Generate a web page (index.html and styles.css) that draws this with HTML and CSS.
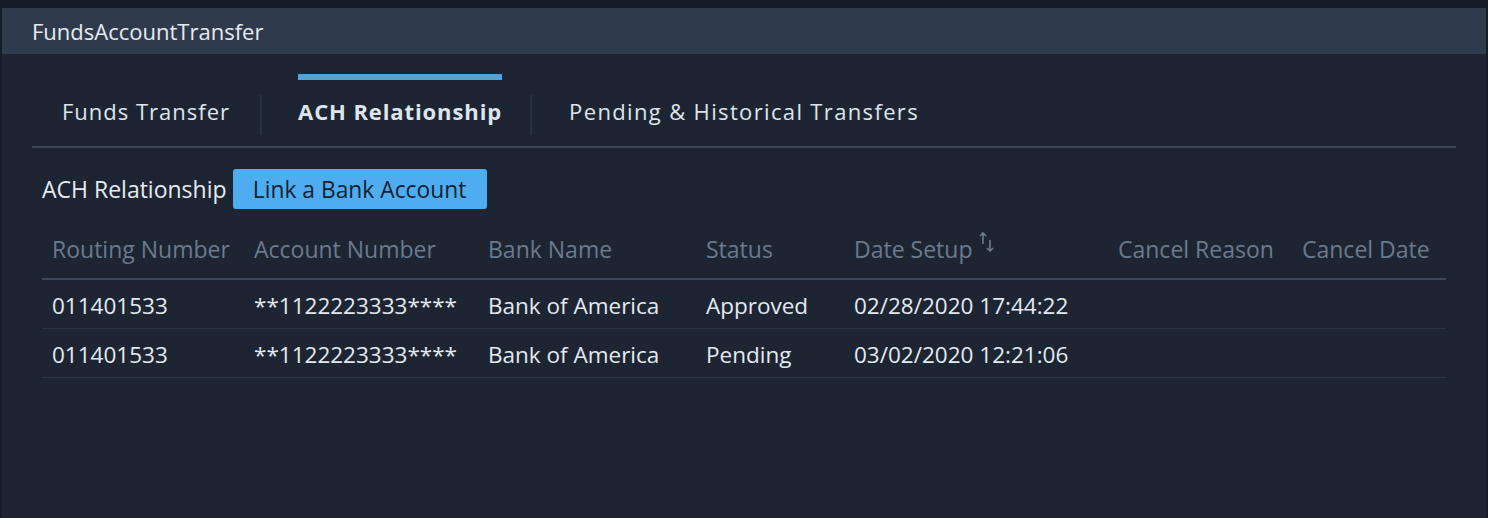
FILE: index.html
```html
<!DOCTYPE html>
<html>
<head>
<meta charset="utf-8">
<link rel="stylesheet" href="styles.css">
</head>
<body>
<div class="window">
  <div class="titlebar">FundsAccountTransfer</div>
  <div class="content">
    <div class="tabs">
      <div class="tab">Funds Transfer</div>
      <div class="sep sep1"></div>
      <div class="tab active">ACH Relationship</div>
      <div class="sep sep2"></div>
      <div class="tab">Pending &amp; Historical Transfers</div>
    </div>
    <div class="section">
      <div class="toolbar">
        <span class="label">ACH Relationship</span>
        <button class="btn">Link a Bank Account</button>
      </div>
      <table class="grid">
        <colgroup>
          <col class="c1"><col class="c2"><col class="c3"><col class="c4"><col class="c5"><col class="c6"><col class="c7">
        </colgroup>
        <thead>
          <tr>
            <th>Routing Number</th>
            <th>Account Number</th>
            <th>Bank Name</th>
            <th>Status</th>
            <th>Date Setup<svg class="sort" width="18" height="22" viewBox="0 0 18 22"><path d="M5 2 L5 13 M2 5 L5 2 L8 5" fill="none" stroke="#6b7a8c" stroke-width="1.6"/><path d="M12 9 L12 20 M9 17 L12 20 L15 17" fill="none" stroke="#6b7a8c" stroke-width="1.6"/></svg></th>
            <th>Cancel Reason</th>
            <th>Cancel Date</th>
          </tr>
        </thead>
        <tbody>
          <tr>
            <td>011401533</td>
            <td>**1122223333****</td>
            <td>Bank of America</td>
            <td>Approved</td>
            <td>02/28/2020 17:44:22</td>
            <td></td>
            <td></td>
          </tr>
          <tr>
            <td>011401533</td>
            <td>**1122223333****</td>
            <td>Bank of America</td>
            <td>Pending</td>
            <td>03/02/2020 12:21:06</td>
            <td></td>
            <td></td>
          </tr>
        </tbody>
      </table>
    </div>
  </div>
</div>
</body>
</html>
```

FILE: styles.css
```css
html, body {
  margin: 0;
  padding: 0;
  background: #161d28;
  font-family: "Open Sans", "Noto Sans", sans-serif;
}
.window {
  margin: 8px 2px 0 2px;
  height: 510px;
  background: #1d2533;
}
.titlebar {
  height: 46px;
  line-height: 46px;
  background: #2f3b4c;
  color: #e6ebf1;
  font-size: 22px;
  padding-left: 30px;
}
.content {
  padding: 20px 30px 0 30px;
}
.tabs {
  display: flex;
  align-items: center;
  height: 72px;
  border-bottom: 2px solid #3b4858;
}
.tab {
  height: 72px;
  box-sizing: border-box;
  border-top: 6px solid transparent;
  line-height: 62px;
  font-size: 22px;
  letter-spacing: 1px;
  color: #dfe5ec;
  white-space: nowrap;
}
.tab:first-child {
  margin-left: 30px;
}
.tab.active {
  border-top-color: #4ea3dc;
  font-weight: 700;
  letter-spacing: 0.9px;
}
.tab:last-child {
  letter-spacing: 1.35px;
}
.sep {
  width: 2px;
  height: 40px;
  margin-top: 10px;
  background: #273241;
}
.sep1 { margin-left: 30px; margin-right: 36px; }
.sep2 { margin-left: 28px; margin-right: 37px; }
.section {
  padding: 21px 10px 0 10px;
}
.toolbar {
  display: flex;
  align-items: center;
  height: 40px;
}
.label {
  font-size: 23px;
  color: #e6ebf1;
  margin-right: 6px;
  white-space: nowrap;
}
.btn {
  height: 40px;
  width: 254px;
  border: none;
  border-radius: 3px;
  background: #4eadf0;
  color: #172030;
  font-family: inherit;
  font-size: 22.8px;
  padding: 0;
  white-space: nowrap;
}
.grid {
  width: 1404px;
  border-collapse: collapse;
  table-layout: fixed;
  margin-top: 14px;
}
.c1 { width: 202px; }
.c2 { width: 234px; }
.c3 { width: 218px; }
.c4 { width: 148px; }
.c5 { width: 264px; }
.c6 { width: 184px; }
.grid th {
  height: 56px;
  text-align: left;
  font-weight: 400;
  font-size: 23px;
  color: #6b7a8c;
  padding: 0 0 4px 10px;
  box-sizing: border-box;
  border-bottom: 2px solid #3b4858;
  white-space: nowrap;
  vertical-align: middle;
}
.sort {
  vertical-align: top;
  margin-left: 6px;
  margin-top: -2px;
}
.grid td {
  height: 46px;
  padding: 2px 0 0 10px;
  font-size: 22.5px;
  color: #e4e9ef;
  border-bottom: 1px solid #283343;
  white-space: nowrap;
}
```
